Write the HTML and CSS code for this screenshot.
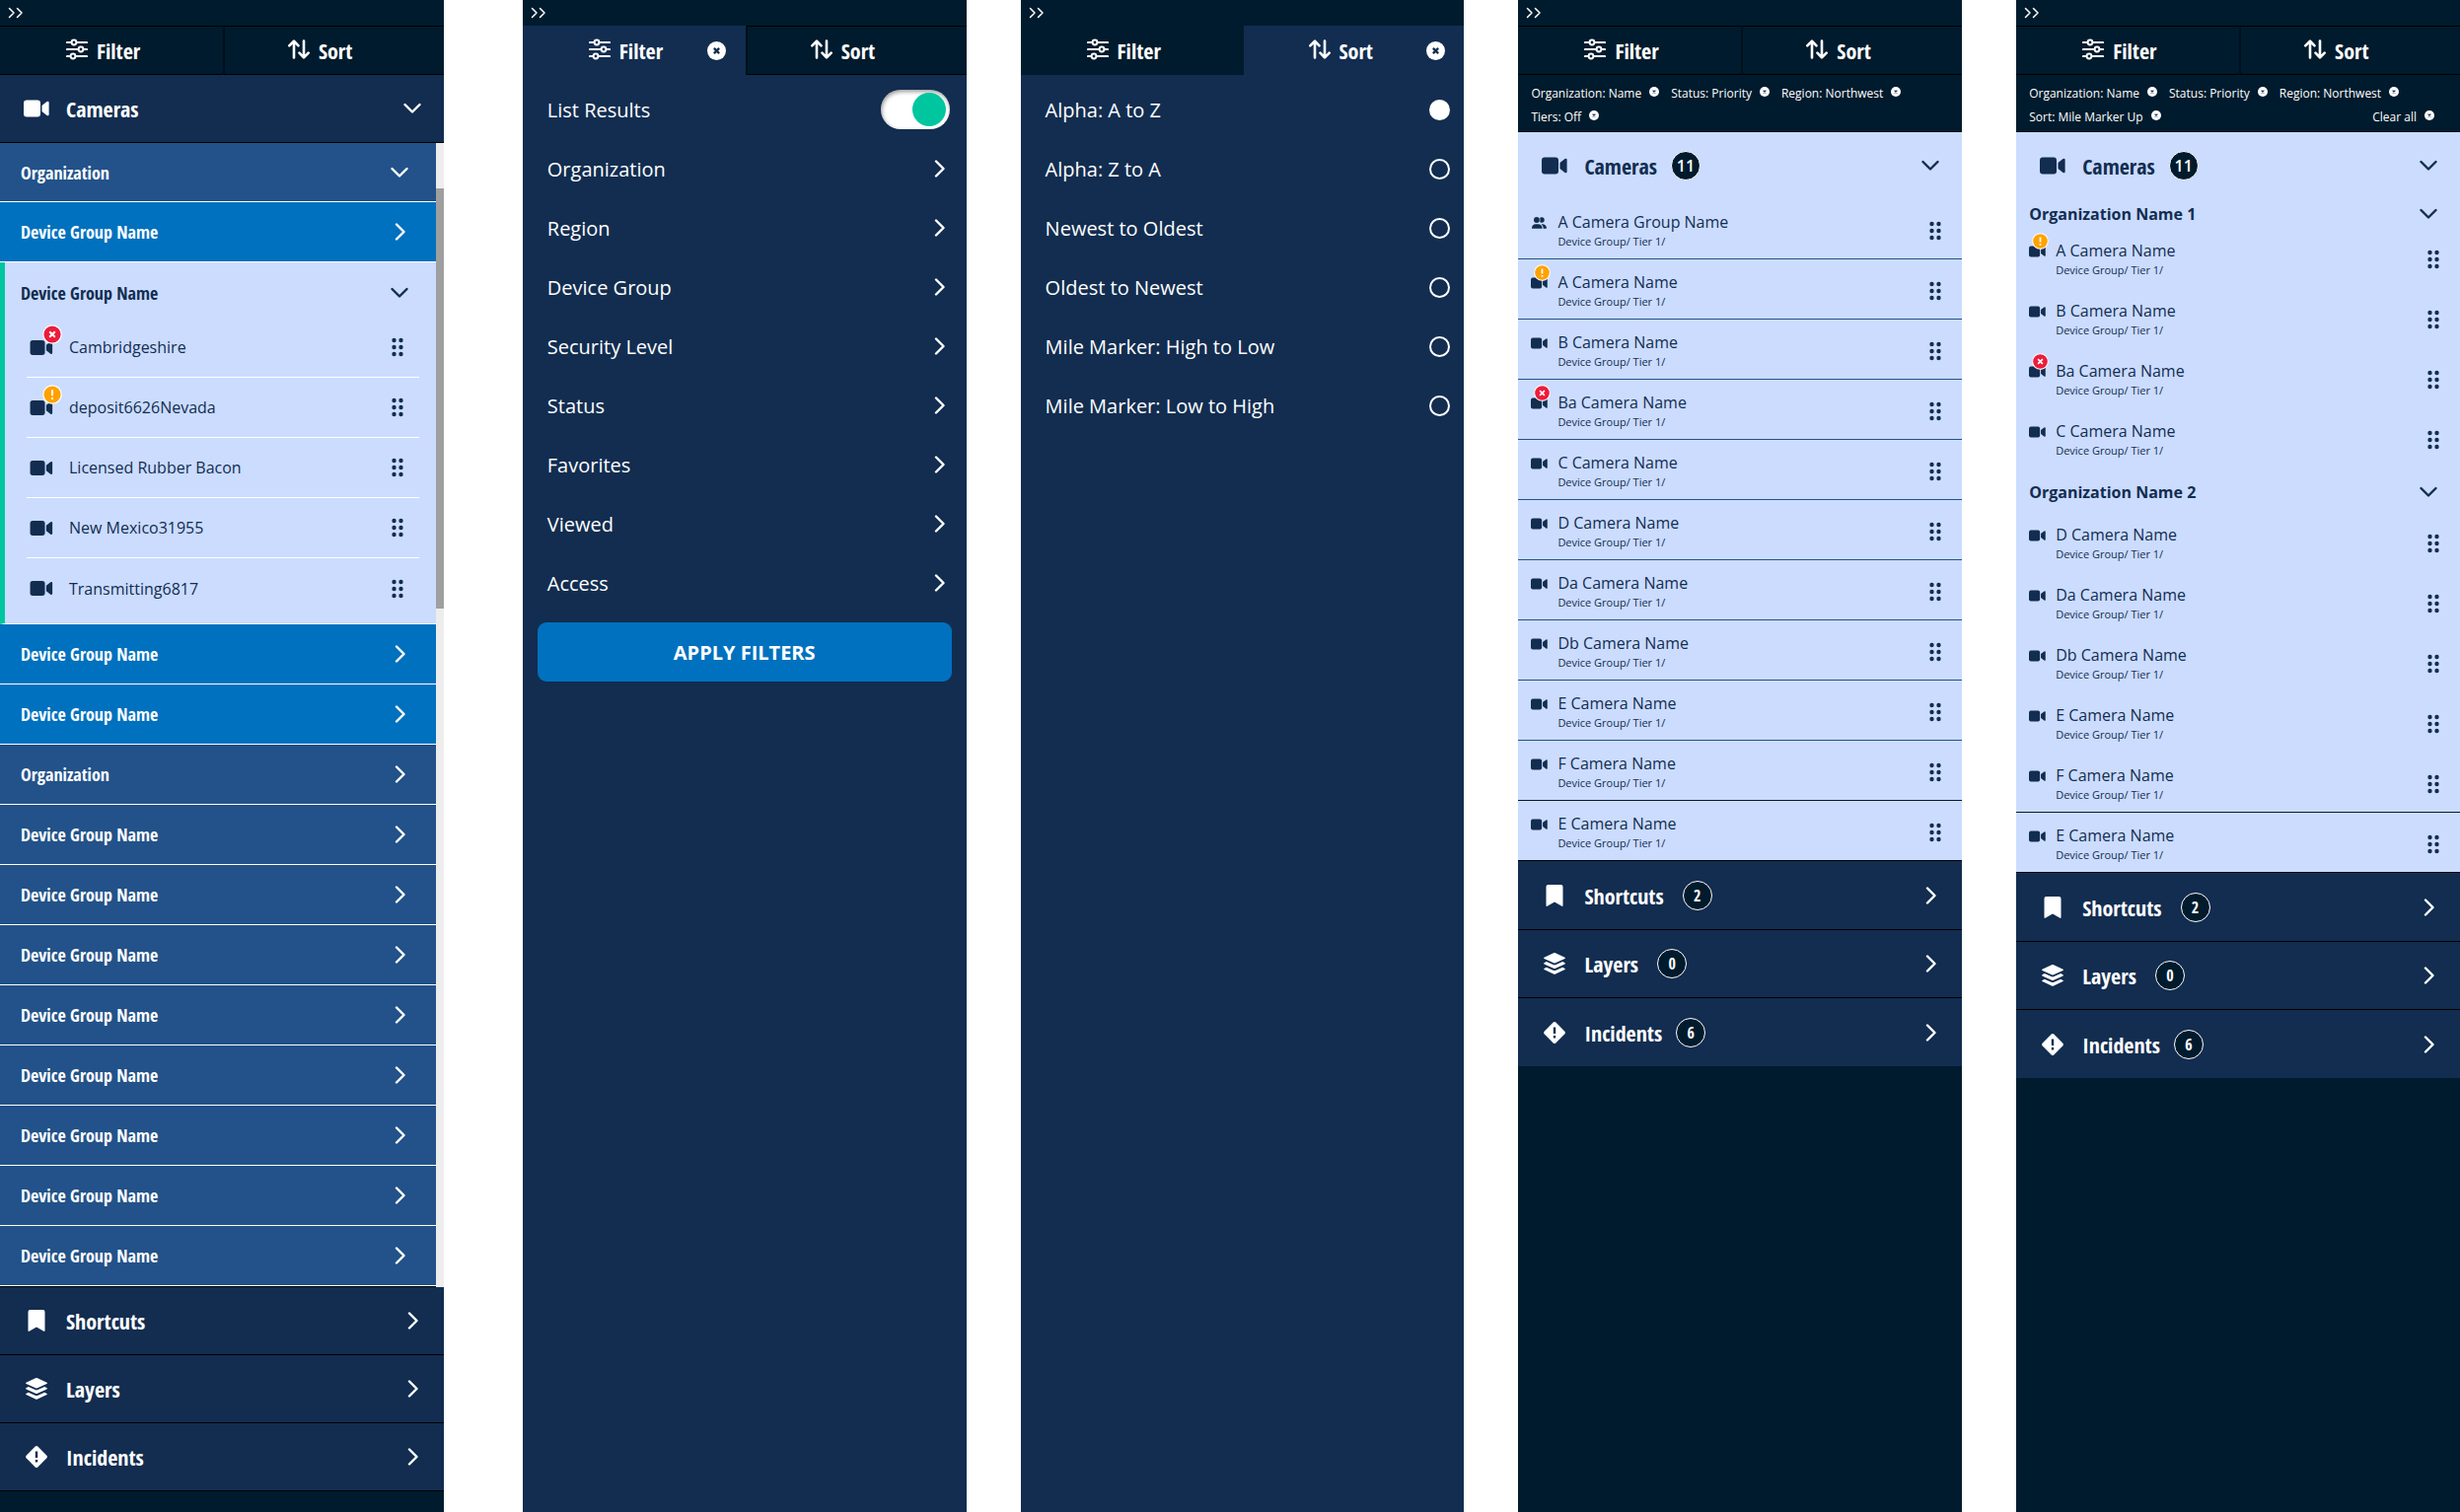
FILE: index.html
```
<!DOCTYPE html>
<html lang="en">
<head>
    <meta charset="UTF-8">
    <meta name="viewport" content="width=device-width, initial-scale=1.0">
    <title>Camera Drawer</title>
    <link rel="stylesheet" href="styles.css">
</head>
<body>

    <!-- Icon sprite -->
    <svg class="sprite" aria-hidden="true">
        <symbol id="i-expand" viewBox="0 0 15 12">
            <path d="M1 1.5 5.5 6 1 10.5M9 1.5 13.500 6 9 10.5" fill="none" stroke="currentColor" stroke-width="1.5" stroke-linecap="round" stroke-linejoin="round"/>
        </symbol>
        <symbol id="i-filter" viewBox="0 0 22 22">
            <path d="M1 4H5M11 4H21M1 11H12M18 11H21M1 18H4M10 18H21" fill="none" stroke="currentColor" stroke-width="2.2" stroke-linecap="round"/>
            <g fill="none" stroke="currentColor" stroke-width="2"><circle cx="8" cy="4" r="2.4"/><circle cx="15" cy="11" r="2.4"/><circle cx="7" cy="18" r="2.4"/></g>
        </symbol>
        <symbol id="i-sort" viewBox="0 0 22 20">
            <path d="M6 18.500V2M1.300 6.300 6 1.600 10.500 6.300M16 1.500V18M11.500 13.700 16 18.400 20.700 13.700" fill="none" stroke="currentColor" stroke-width="2.600" stroke-linecap="round" stroke-linejoin="round"/>
        </symbol>
        <symbol id="i-close" viewBox="0 0 18 18">
            <circle cx="9" cy="9" r="9" fill="currentColor"/>
            <path d="M6.500 6.500 11.500 11.500M11.500 6.500 6.500 11.500" class="cut" stroke-width="2.200"/>
        </symbol>
        <symbol id="i-video" viewBox="0 0 26 17">
            <rect width="17" height="17" rx="3" fill="currentColor"/>
            <path d="M18.500 5.500 23.500 1.500Q25.600 .6 25.600 2.500V14.500Q25.600 16.400 23.500 15.500L18.500 11.500Z" fill="currentColor"/>
        </symbol>
        <symbol id="i-down" viewBox="0 0 18 18">
            <path d="M1.500 5 9 12.500 16.500 5" fill="none" stroke="currentColor" stroke-width="2.400" stroke-linecap="round" stroke-linejoin="round"/>
        </symbol>
        <symbol id="i-right" viewBox="0 0 18 18">
            <path d="M6 1.500 13.500 9 6 16.500" fill="none" stroke="currentColor" stroke-width="2.400" stroke-linecap="round" stroke-linejoin="round"/>
        </symbol>
        <symbol id="i-bookmark" viewBox="0 0 26 24">
            <path d="M4.500 3Q4.500 1 6.500 1H19.500Q21.500 1 21.500 3V22Q21.500 23.500 20 22.600L13 18.500 6 22.600Q4.500 23.500 4.500 22Z" fill="currentColor"/>
        </symbol>
        <symbol id="i-layers" viewBox="0 0 26 24">
            <path d="M12 1.300Q13 .9 14 1.300L23.500 5.700Q24.500 6.300 23.500 6.900L14 11.300Q13 11.700 12 11.300L2.500 6.900Q1.500 6.300 2.500 5.700Z" fill="currentColor"/>
            <path d="M4.800 10 11.500 13.100Q13 13.700 14.500 13.100L21.200 10 23.500 11.200Q24.500 11.800 23.500 12.400L14 16.800Q13 17.200 12 16.800L2.500 12.400Q1.500 11.800 2.500 11.200Z" fill="currentColor"/>
            <path d="M4.800 15.700 11.500 18.800Q13 19.400 14.500 18.800L21.200 15.700 23.500 16.900Q24.500 17.500 23.500 18.100L14 22.500Q13 22.900 12 22.500L2.500 18.100Q1.500 17.500 2.500 16.900Z" fill="currentColor"/>
        </symbol>
        <symbol id="i-incident" viewBox="0 0 26 24">
            <path d="M11.700 1.600Q13 .4 14.300 1.600L23.400 10.700Q24.600 12 23.400 13.300L14.300 22.400Q13 23.600 11.700 22.400L2.600 13.300Q1.400 12 2.600 10.700Z" fill="currentColor"/>
            <path d="M13 6.500V13M13 15V17.400" class="cut" stroke-width="2.400"/>
        </symbol>
        <symbol id="i-users" viewBox="0 0 18 14">
            <circle cx="12" cy="3.500" r="3.100" fill="currentColor"/>
            <path d="M12.500 8.500Q17.700 8.500 17.700 13.800H14Q14 10.500 11.500 8.600Z" fill="currentColor"/>
            <circle cx="6" cy="3.500" r="4.200" class="gap"/>
            <circle cx="6" cy="3.500" r="3.400" fill="currentColor"/>
            <path d="M.2 13.800Q.2 8.500 5 8.500H7.500Q12.600 8.500 12.600 13.800Z" fill="currentColor"/>
        </symbol>
        <symbol id="i-dots" viewBox="0 0 14 20">
            <g fill="currentColor"><circle cx="3.500" cy="3" r="2.200"/><circle cx="10.500" cy="3" r="2.200"/><circle cx="3.500" cy="10" r="2.200"/><circle cx="10.500" cy="10" r="2.200"/><circle cx="3.500" cy="17" r="2.200"/><circle cx="10.500" cy="17" r="2.200"/></g>
        </symbol>
        <symbol id="i-error" viewBox="0 0 20 20">
            <circle cx="10" cy="10" r="9.200" fill="#ec1c3b" stroke="#fff" stroke-width="1.200"/>
            <path d="M7.200 7.200 12.800 12.800M12.800 7.200 7.200 12.800" stroke="#fff" stroke-width="2"/>
        </symbol>
        <symbol id="i-warn" viewBox="0 0 20 20">
            <circle cx="10" cy="10" r="9.200" fill="#ffa200" stroke="#fff" stroke-width="1.200"/>
            <path d="M10 5.200V11.200M10 13V15" stroke="#fff" stroke-width="2"/>
        </symbol>
    </svg>

    <main class="board">

        <!-- Device tree -->
        <section class="panel">
            <div class="topbar"><button class="expand" aria-label="Collapse drawer"><svg class="icon-expand"><use href="#i-expand"/></svg></button></div>
            <div class="tabs">
                <div class="tab"><button class="tab-btn"><svg class="icon-tab"><use href="#i-filter"/></svg>Filter</button></div>
                <div class="tab"><button class="tab-btn"><svg class="icon-tab"><use href="#i-sort"/></svg>Sort</button></div>
            </div>
            <button class="section"><svg class="icon-section"><use href="#i-video"/></svg>Cameras<svg class="chevron"><use href="#i-down"/></svg></button>
            <div class="tree-wrap">
                <div class="tree">
                    <button class="tree-row first">Organization<svg class="chevron"><use href="#i-down"/></svg></button>
                    <button class="tree-row bright">Device Group Name<svg class="chevron"><use href="#i-right"/></svg></button>
                    <div class="tree-group">
                        <button class="tree-head">Device Group Name<svg class="chevron"><use href="#i-down"/></svg></button>
                        <ul class="device-list" id="devices"></ul>
                    </div>
                    <button class="tree-row bright">Device Group Name<svg class="chevron"><use href="#i-right"/></svg></button>
                    <button class="tree-row bright">Device Group Name<svg class="chevron"><use href="#i-right"/></svg></button>
                    <button class="tree-row">Organization<svg class="chevron"><use href="#i-right"/></svg></button>
                    <button class="tree-row">Device Group Name<svg class="chevron"><use href="#i-right"/></svg></button>
                    <button class="tree-row">Device Group Name<svg class="chevron"><use href="#i-right"/></svg></button>
                    <button class="tree-row">Device Group Name<svg class="chevron"><use href="#i-right"/></svg></button>
                    <button class="tree-row">Device Group Name<svg class="chevron"><use href="#i-right"/></svg></button>
                    <button class="tree-row">Device Group Name<svg class="chevron"><use href="#i-right"/></svg></button>
                    <button class="tree-row">Device Group Name<svg class="chevron"><use href="#i-right"/></svg></button>
                    <button class="tree-row">Device Group Name<svg class="chevron"><use href="#i-right"/></svg></button>
                    <button class="tree-row">Device Group Name<svg class="chevron"><use href="#i-right"/></svg></button>
                </div>
                <div class="scrollbar"><div class="thumb"></div></div>
            </div>
            <button class="section"><svg class="icon-section"><use href="#i-bookmark"/></svg>Shortcuts<svg class="chevron"><use href="#i-right"/></svg></button>
            <button class="section"><svg class="icon-section"><use href="#i-layers"/></svg>Layers<svg class="chevron"><use href="#i-right"/></svg></button>
            <button class="section"><svg class="icon-section"><use href="#i-incident"/></svg>Incidents<svg class="chevron"><use href="#i-right"/></svg></button>
        </section>

        <!-- Filter tab open -->
        <section class="panel panel-navy">
            <div class="topbar"><button class="expand" aria-label="Collapse drawer"><svg class="icon-expand"><use href="#i-expand"/></svg></button></div>
            <div class="tabs">
                <div class="tab active">
                    <button class="tab-btn"><svg class="icon-tab"><use href="#i-filter"/></svg>Filter</button>
                    <button class="tab-close" aria-label="Close filter"><svg class="icon-close"><use href="#i-close"/></svg></button>
                </div>
                <div class="tab"><button class="tab-btn"><svg class="icon-tab"><use href="#i-sort"/></svg>Sort</button></div>
            </div>
            <div class="options">
                <label class="option">List Results<input class="toggle" type="checkbox" checked></label>
                <button class="option">Organization<svg class="chevron"><use href="#i-right"/></svg></button>
                <button class="option">Region<svg class="chevron"><use href="#i-right"/></svg></button>
                <button class="option">Device Group<svg class="chevron"><use href="#i-right"/></svg></button>
                <button class="option">Security Level<svg class="chevron"><use href="#i-right"/></svg></button>
                <button class="option">Status<svg class="chevron"><use href="#i-right"/></svg></button>
                <button class="option">Favorites<svg class="chevron"><use href="#i-right"/></svg></button>
                <button class="option">Viewed<svg class="chevron"><use href="#i-right"/></svg></button>
                <button class="option">Access<svg class="chevron"><use href="#i-right"/></svg></button>
            </div>
            <button class="apply">APPLY FILTERS</button>
        </section>

        <!-- Sort tab open -->
        <section class="panel panel-navy">
            <div class="topbar"><button class="expand" aria-label="Collapse drawer"><svg class="icon-expand"><use href="#i-expand"/></svg></button></div>
            <div class="tabs">
                <div class="tab"><button class="tab-btn"><svg class="icon-tab"><use href="#i-filter"/></svg>Filter</button></div>
                <div class="tab active">
                    <button class="tab-btn"><svg class="icon-tab"><use href="#i-sort"/></svg>Sort</button>
                    <button class="tab-close" aria-label="Close sort"><svg class="icon-close"><use href="#i-close"/></svg></button>
                </div>
            </div>
            <div class="options">
                <label class="option">Alpha: A to Z<input class="radio" type="radio" name="sort" checked></label>
                <label class="option">Alpha: Z to A<input class="radio" type="radio" name="sort"></label>
                <label class="option">Newest to Oldest<input class="radio" type="radio" name="sort"></label>
                <label class="option">Oldest to Newest<input class="radio" type="radio" name="sort"></label>
                <label class="option">Mile Marker: High to Low<input class="radio" type="radio" name="sort"></label>
                <label class="option">Mile Marker: Low to High<input class="radio" type="radio" name="sort"></label>
            </div>
        </section>

        <!-- Filtered list -->
        <section class="panel">
            <div class="topbar"><button class="expand" aria-label="Collapse drawer"><svg class="icon-expand"><use href="#i-expand"/></svg></button></div>
            <div class="tabs">
                <div class="tab"><button class="tab-btn"><svg class="icon-tab"><use href="#i-filter"/></svg>Filter</button></div>
                <div class="tab"><button class="tab-btn"><svg class="icon-tab"><use href="#i-sort"/></svg>Sort</button></div>
            </div>
            <div class="chips">
                <button class="chip">Organization: Name<svg class="icon-chip"><use href="#i-close"/></svg></button>
                <button class="chip">Status: Priority<svg class="icon-chip"><use href="#i-close"/></svg></button>
                <button class="chip">Region: Northwest<svg class="icon-chip"><use href="#i-close"/></svg></button>
                <button class="chip">Tiers: Off<svg class="icon-chip"><use href="#i-close"/></svg></button>
            </div>
            <button class="section light"><svg class="icon-section"><use href="#i-video"/></svg>Cameras<span class="count wide">11</span><svg class="chevron"><use href="#i-down"/></svg></button>
            <ul class="camera-list lined closing" id="filtered"></ul>
            <button class="section"><svg class="icon-section"><use href="#i-bookmark"/></svg>Shortcuts<span class="count roomy">2</span><svg class="chevron"><use href="#i-right"/></svg></button>
            <button class="section"><svg class="icon-section"><use href="#i-layers"/></svg>Layers<span class="count roomy">0</span><svg class="chevron"><use href="#i-right"/></svg></button>
            <button class="section last"><svg class="icon-section"><use href="#i-incident"/></svg>Incidents<span class="count">6</span><svg class="chevron"><use href="#i-right"/></svg></button>
        </section>

        <!-- Sorted list, grouped by organization -->
        <section class="panel">
            <div class="topbar"><button class="expand" aria-label="Collapse drawer"><svg class="icon-expand"><use href="#i-expand"/></svg></button></div>
            <div class="tabs">
                <div class="tab"><button class="tab-btn"><svg class="icon-tab"><use href="#i-filter"/></svg>Filter</button></div>
                <div class="tab"><button class="tab-btn"><svg class="icon-tab"><use href="#i-sort"/></svg>Sort</button></div>
            </div>
            <div class="chips">
                <button class="chip">Organization: Name<svg class="icon-chip"><use href="#i-close"/></svg></button>
                <button class="chip">Status: Priority<svg class="icon-chip"><use href="#i-close"/></svg></button>
                <button class="chip">Region: Northwest<svg class="icon-chip"><use href="#i-close"/></svg></button>
                <button class="chip">Sort: Mile Marker Up<svg class="icon-chip"><use href="#i-close"/></svg></button>
                <button class="chip clear">Clear all<svg class="icon-chip"><use href="#i-close"/></svg></button>
            </div>
            <button class="section light"><svg class="icon-section"><use href="#i-video"/></svg>Cameras<span class="count wide">11</span><svg class="chevron"><use href="#i-down"/></svg></button>
            <button class="org">Organization Name 1<svg class="chevron"><use href="#i-down"/></svg></button>
            <ul class="camera-list" id="org1"></ul>
            <button class="org spaced">Organization Name 2<svg class="chevron"><use href="#i-down"/></svg></button>
            <ul class="camera-list closing" id="org2"></ul>
            <button class="section"><svg class="icon-section"><use href="#i-bookmark"/></svg>Shortcuts<span class="count roomy">2</span><svg class="chevron"><use href="#i-right"/></svg></button>
            <button class="section"><svg class="icon-section"><use href="#i-layers"/></svg>Layers<span class="count roomy">0</span><svg class="chevron"><use href="#i-right"/></svg></button>
            <button class="section last"><svg class="icon-section"><use href="#i-incident"/></svg>Incidents<span class="count">6</span><svg class="chevron"><use href="#i-right"/></svg></button>
        </section>

    </main>

    <script>
        const devices = [
            { name: "Cambridgeshire", badge: "error" },
            { name: "deposit6626Nevada", badge: "warn" },
            { name: "Licensed Rubber Bacon" },
            { name: "New Mexico31955" },
            { name: "Transmitting6817" }
        ];

        const cameras = [
            { name: "A Camera Name", badge: "warn" },
            { name: "B Camera Name" },
            { name: "Ba Camera Name", badge: "error" },
            { name: "C Camera Name" },
            { name: "D Camera Name" },
            { name: "Da Camera Name" },
            { name: "Db Camera Name" },
            { name: "E Camera Name" },
            { name: "F Camera Name" },
            { name: "E Camera Name" }
        ];

        function iconHtml(item) {
            const badge = item.badge ? `<svg class="badge"><use href="#i-${item.badge}"/></svg>` : '';
            return `<span class="item-icon"><svg class="glyph"><use href="#i-${item.icon || 'video'}"/></svg>${badge}</span>`;
        }

        const dragBtn = '<button class="drag" aria-label="Move"><svg class="icon-dots"><use href="#i-dots"/></svg></button>';

        function renderDevices(id, items) {
            document.getElementById(id).innerHTML = items.map(item =>
                `<li class="device">${iconHtml(item)}<span>${item.name}</span>${dragBtn}</li>`
            ).join('');
        }

        function renderCameras(id, items) {
            document.getElementById(id).innerHTML = items.map(item =>
                `<li class="camera">${iconHtml(item)}<div class="camera-text"><div class="camera-name">${item.name}</div><div class="camera-path">Device Group/ Tier 1/</div></div>${dragBtn}</li>`
            ).join('');
        }

        renderDevices('devices', devices);
        renderCameras('filtered', [{ name: "A Camera Group Name", icon: "users" }, ...cameras]);
        renderCameras('org1', cameras.slice(0, 4));
        renderCameras('org2', cameras.slice(4));
    </script>

</body>
</html>
```
FILE: styles.css
```
* {
    margin: 0;
    padding: 0;
    box-sizing: border-box;
}

:root {
    --dark: #001b2d;
    --navy: #122d50;
    --blue: #225289;
    --bright: #0071be;
    --light: #cbdcff;
    --green: #00c6a0;
}

body {
    font-family: "Open Sans", "Noto Sans", sans-serif;
    background: #fff;
    color: #fff;
}

button {
    font: inherit;
    color: inherit;
    background: none;
    border: none;
    text-align: left;
    cursor: pointer;
}

ul {
    list-style-type: none;
}

svg {
    display: block;
    flex-shrink: 0;
}

.sprite {
    display: none;
}

.cut {
    stroke: var(--navy);
}

.gap {
    fill: var(--light);
}

.board {
    display: flex;
    gap: 55px;
    min-height: 100vh;
}

.panel {
    flex: 1 1 0;
    min-width: 0;
    display: flex;
    flex-direction: column;
    background: var(--dark);
}

.panel:first-child {
    margin-right: 25px;
}

.panel-navy {
    background: var(--navy);
}

/* Top bar and tabs */
.topbar {
    height: 26px;
    padding: 7px 8px;
    background: var(--dark);
}

.expand {
    display: block;
}

.icon-expand {
    width: 16px;
    height: 12px;
}

.tabs {
    display: flex;
    height: 50px;
}

.tab {
    flex: 1;
    display: flex;
    align-items: center;
    padding: 0 20px 0 67px;
    background: var(--dark);
    border-top: 1px solid #000;
    border-bottom: 1px solid #000;
}

.tab + .tab {
    padding: 0 19px 0 64px;
    border-left: 2px solid #00101b;
}

.panel-navy .tab:first-child {
    border-color: var(--dark);
}

.tab.active,
.panel-navy .tab.active {
    background: var(--navy);
    border-color: var(--navy);
}

.tab-btn {
    display: flex;
    align-items: center;
    gap: 9px;
    font-family: "Open Sans Condensed", "Open Sans", sans-serif;
    font-size: 22px;
    font-weight: 700;
}

.icon-tab {
    width: 22px;
    height: 22px;
    margin-bottom: 2px;
}

.tab-close {
    margin-left: auto;
}

.icon-close {
    width: 19px;
    height: 19px;
}

/* Section headers */
.section {
    display: flex;
    align-items: center;
    height: 69px;
    padding: 0 23px 0 24px;
    background: var(--navy);
    border-bottom: 1px solid #000;
    font-family: "Open Sans Condensed", "Open Sans", sans-serif;
    font-size: 22px;
    font-weight: 700;
}

.section.light {
    height: 68px;
    background: var(--light);
    border-bottom: none;
    color: var(--navy);
}

.section.last {
    border-bottom: none;
}

.camera-list + .section {
    height: 70px;
}

.icon-section {
    width: 26px;
    height: 24px;
    margin-right: 17px;
}

.chevron {
    width: 18px;
    height: 18px;
    margin-left: auto;
}

.count {
    display: flex;
    align-items: center;
    justify-content: center;
    width: 30px;
    height: 30px;
    margin-left: 14px;
    border: 1px solid #fff;
    border-radius: 50%;
    background: var(--dark);
    color: #fff;
    font-size: 16px;
}

.count.roomy {
    margin-left: 19px;
}

.count.wide {
    font-family: "Open Sans", sans-serif;
    font-weight: 600;
}

/* Device tree */
.tree-wrap {
    display: flex;
}

.tree {
    flex: 1;
    display: flex;
    flex-direction: column;
    border-bottom: 1px solid #000;
}

.tree-row,
.tree-head {
    display: flex;
    align-items: center;
    height: 61px;
    padding: 0 28px 0 21px;
    background: var(--blue);
    border-bottom: 1px solid #fff;
    font-family: "Open Sans Condensed", "Open Sans", sans-serif;
    font-size: 18px;
    font-weight: 700;
}

.tree-row.first {
    height: 60px;
}

.tree-row.bright {
    background: var(--bright);
}

.tree-group {
    padding-bottom: 5px;
    background: var(--light);
    border-left: 5px solid var(--green);
    border-bottom: 1px solid #fff;
    color: var(--navy);
}

.tree-head {
    width: 100%;
    height: 56px;
    padding: 6px 28px 0 16px;
    background: none;
    border: none;
}

.device-list {
    padding: 0 17px 0 22px;
}

.device {
    display: flex;
    align-items: center;
    height: 61px;
    padding: 0 15px 0 3px;
    border-bottom: 1px solid #fff;
    font-size: 16px;
}

.device:last-child {
    border-bottom: none;
}

.scrollbar {
    width: 8px;
    background: #ededed;
}

.thumb {
    height: 426px;
    margin-top: 46px;
    background: #9f9f9f;
}

/* List item parts */
.item-icon {
    position: relative;
    width: 40px;
}

.device .glyph {
    width: 24px;
    height: 15px;
}

.badge {
    position: absolute;
    top: -16px;
    left: 13px;
    width: 20px;
    height: 20px;
}

.drag {
    margin-left: auto;
}

.icon-dots {
    width: 14px;
    height: 20px;
}

/* Filter and sort options */
.options {
    display: flex;
    flex-direction: column;
    padding-top: 5px;
}

.option {
    display: flex;
    align-items: center;
    justify-content: space-between;
    height: 60px;
    padding: 0 14px 0 25px;
    font-size: 20px;
    cursor: pointer;
}

.option .chevron {
    margin-right: 5px;
}

.toggle {
    appearance: none;
    display: flex;
    justify-content: flex-end;
    align-items: center;
    width: 70px;
    height: 40px;
    margin-right: 3px;
    padding: 0 4px;
    border-radius: 20px;
    background: #fff;
    box-shadow: inset 1px 2px 4px rgba(0, 0, 0, 0.4);
    cursor: pointer;
}

.toggle::before {
    content: "";
    width: 34px;
    height: 34px;
    border-radius: 50%;
    background: var(--green);
}

.toggle:not(:checked) {
    justify-content: flex-start;
}

.radio {
    appearance: none;
    width: 21px;
    height: 21px;
    border: 2px solid #fff;
    border-radius: 50%;
    cursor: pointer;
}

.radio:checked {
    background: #fff;
}

.apply {
    height: 60px;
    margin: 10px 15px;
    border-radius: 9px;
    background: var(--bright);
    font-size: 20px;
    font-weight: 700;
    text-align: center;
}

/* Chips */
.chips {
    display: flex;
    flex-wrap: wrap;
    column-gap: 12px;
    padding: 6px 26px 3px 13px;
    border-bottom: 1px solid #000;
}

.chip {
    display: flex;
    align-items: center;
    gap: 8px;
    height: 24px;
    font-size: 12px;
}

.chip.clear {
    margin-left: auto;
}

.icon-chip {
    width: 10px;
    height: 10px;
    margin-bottom: 2px;
}

/* Camera lists */
.org {
    display: flex;
    align-items: center;
    height: 29px;
    padding: 0 23px 0 13px;
    background: var(--light);
    color: var(--navy);
    font-size: 16px;
    font-weight: 700;
}

.org.spaced {
    height: 44px;
    padding-top: 4px;
}

.camera-list {
    background: var(--light);
    color: var(--navy);
}

.camera {
    display: flex;
    align-items: center;
    height: 61px;
    padding: 2px 20px 0 13px;
    border-bottom: 1px solid transparent;
}

.lined .camera {
    border-color: var(--blue);
}

.closing .camera:nth-last-child(2) {
    border-color: var(--dark);
}

.closing .camera:last-child {
    border-color: #000;
}

.camera .item-icon {
    width: 27px;
    margin-bottom: 14px;
}

.camera .glyph {
    width: 17px;
    height: 12px;
}

.camera [href="#i-users"] {
    transform: none;
}

.camera .badge {
    top: -13px;
    left: 3px;
    width: 17px;
    height: 17px;
}

.camera-name {
    font-size: 16px;
    line-height: 22px;
}

.camera-path {
    font-size: 11px;
    line-height: 17px;
}

.camera .drag {
    margin-top: 2px;
}
```
